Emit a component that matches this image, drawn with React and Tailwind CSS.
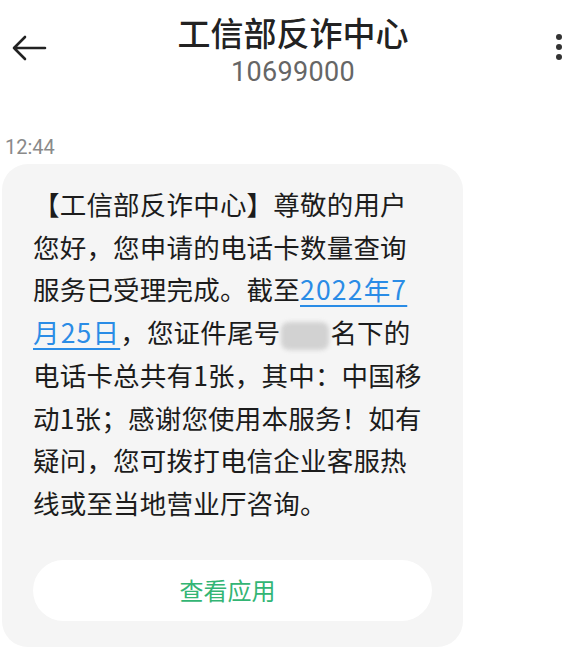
import React from "react";

const font = {
  fontFamily: '"Noto Sans CJK SC", "Noto Sans", sans-serif',
};

function BackArrow() {
  return (
    <svg width="36" height="28" viewBox="0 0 36 28" fill="none">
      <path
        d="M34 14H3M14 3L3 14l11 11"
        stroke="#222"
        strokeWidth="2.6"
        strokeLinecap="round"
        strokeLinejoin="round"
      />
    </svg>
  );
}

function Link({ children }) {
  return (
    <span className="text-[#2a8ce6] underline underline-offset-[5px] decoration-[1.5px] tracking-[1.2px]">
      {children}
    </span>
  );
}

export default function App() {
  return (
    <div
      className="w-[586px] h-[665px] bg-white overflow-hidden text-[#1c1c1c]"
      style={font}
    >
      {/* Header */}
      <div className="flex items-start pt-[12px] h-[96px]">
        <div className="w-[60px] pl-[11px] pt-[22px]">
          <BackArrow />
        </div>
        <div className="flex-1 flex flex-col items-center">
          <div className="text-[33px] leading-[40px] font-medium text-[#222]">
            工信部反诈中心
          </div>
          <div className="font-['Roboto',sans-serif] text-[27px] leading-[32px] text-[#666] mt-[4px] tracking-[0.3px]">
            10699000
          </div>
        </div>
        <div className="w-[60px] flex flex-col items-center gap-[4px] pt-[22px] pl-[6px]">
          <span className="w-[6px] h-[6px] rounded-full bg-[#333]" />
          <span className="w-[6px] h-[6px] rounded-full bg-[#333]" />
          <span className="w-[6px] h-[6px] rounded-full bg-[#333]" />
        </div>
      </div>

      {/* Time */}
      <div className="pl-[5px] mt-[38px] font-['Roboto',sans-serif] text-[20px] leading-[26px] text-[#8a8a8a]">
        12:44
      </div>

      {/* Bubble */}
      <div className="ml-[2px] mt-[4px] w-[461px] bg-[#f5f5f5] rounded-[26px] pt-[19px] pb-[26px] px-[31px]">
        <div className="text-[26.5px] leading-[42.7px] text-[#1c1c1c] tracking-[0.2px] whitespace-nowrap">
          <div>【工信部反诈中心】尊敬的用户</div>
          <div>您好，您申请的电话卡数量查询</div>
          <div>
            服务已受理完成。截至<Link>2022年7</Link>
          </div>
          <div>
            <Link>月25日</Link>，您证件尾号
            <span className="inline-block align-middle w-[48px] h-[28px] bg-[#d2d2d2] rounded-[8px] blur-[2px] mx-[1px]" />
            名下的
          </div>
          <div>电话卡总共有1张，其中：中国移</div>
          <div>动1张；感谢您使用本服务！如有</div>
          <div>疑问，您可拨打电信企业客服热</div>
          <div>线或至当地营业厅咨询。</div>
        </div>
        <div className="mt-[35px] h-[61px] bg-white rounded-full flex items-center justify-center">
          <span className="text-[24px] text-[#33b574] -ml-[10px]">查看应用</span>
        </div>
      </div>
    </div>
  );
}
